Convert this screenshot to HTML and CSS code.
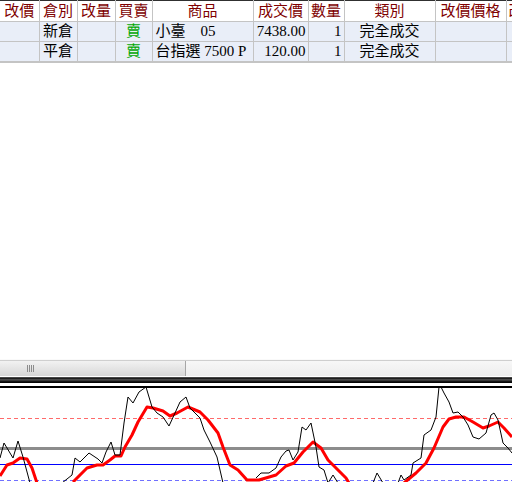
FILE: index.html
```html
<!DOCTYPE html>
<html>
<head>
<meta charset="utf-8">
<link rel="stylesheet" href="styles.css">
</head>
<body>
<div class="app">
  <div class="table-wrap">
    <table class="grid">
      <colgroup>
        <col style="width:39px"><col style="width:38px"><col style="width:38px"><col style="width:37px">
        <col style="width:101px"><col style="width:55px"><col style="width:36px"><col style="width:91px">
        <col style="width:71px"><col style="width:64px">
      </colgroup>
      <thead>
        <tr>
          <th>改價</th><th>倉別</th><th>改量</th><th>買賣</th><th>商品</th><th>成交價</th><th>數量</th><th>類別</th><th>改價價格</th><th class="left">改價數量</th>
        </tr>
      </thead>
      <tbody>
        <tr>
          <td></td><td class="c">新倉</td><td></td><td class="c sell">賣</td><td class="l">小臺    05</td><td class="r">7438.00</td><td class="r">1</td><td class="c">完全成交</td><td></td><td></td>
        </tr>
        <tr>
          <td></td><td class="c">平倉</td><td></td><td class="c sell">賣</td><td class="l">台指選 7500 P</td><td class="r">120.00</td><td class="r">1</td><td class="c">完全成交</td><td></td><td></td>
        </tr>
      </tbody>
    </table>
  </div>
  <div class="blank"></div>
  <div class="hscroll">
    <div class="thumb"><span class="grip"></span></div>
    <div class="track"></div>
  </div>
  <div class="gap1"></div>
  <div class="splitter"></div>
  <div class="gap2"></div>
  <div class="chart-frame">
    <svg class="chart" viewBox="0 388 512 94" preserveAspectRatio="none">
      <line x1="0" y1="418.5" x2="512" y2="418.5" stroke="#ff6a6a" stroke-width="1" stroke-dasharray="4 3"/>
      <line x1="0" y1="448.5" x2="512" y2="448.5" stroke="#8c8c8c" stroke-width="3"/>
      <line x1="0" y1="464.5" x2="512" y2="464.5" stroke="#0000ff" stroke-width="1"/>
      <line x1="0" y1="480.5" x2="512" y2="480.5" stroke="#7070ff" stroke-width="1" stroke-dasharray="4 3"/>
      <polyline fill="none" stroke="#ff0000" stroke-width="3" stroke-linejoin="round"
        points="0,476 7,465 13,463 20,458 27,459 32,468 37,483"/>
      <polyline fill="none" stroke="#ff0000" stroke-width="3" stroke-linejoin="round"
        points="73,482 87,468 97,465 103,465 110,460 115,456 121,456 125,447 132,435 138,422 147,407 153,408 163,411 170,416 177,413 188,407 200,412 208,420 218,433 223,447 230,465 238,470 247,480 259,480 276,475 286,466 294,463 303,452 313,442 321,448 328,460 336,468 346,478 349,483"/>
      <polyline fill="none" stroke="#ff0000" stroke-width="3" stroke-linejoin="round"
        points="404,483 416,473 426,463 434,448 443,427 449,419 456,417 464,417 473,422 483,428 489,426 498,422 504,428 512,437"/>
      <polyline fill="none" stroke="#000" stroke-width="1"
        points="0,458 4,443 13,458 18,441 23,457 30,483"/>
      <polyline fill="none" stroke="#000" stroke-width="1"
        points="62,483 72,475 75,458 80,462 89,453 98,459 102,463 106,452 111,442 115,455 120,455 124,423 128,397 133,403 139,392 146,387 152,407 157,413 163,417 169,426 175,413 180,402 186,397 190,408 200,418 204,430 210,442 217,457 223,483"/>
      <polyline fill="none" stroke="#000" stroke-width="1"
        points="256,478 261,473 269,473 276,468 281,457 286,451 289,450 293,460 298,452 302,427 306,430 311,423 316,447 319,467 324,470 328,483 333,475 338,483"/>
      <polyline fill="none" stroke="#000" stroke-width="1"
        points="373,483 377,473 383,483"/>
      <polyline fill="none" stroke="#000" stroke-width="1"
        points="398,483 401,475 404,480 411,475 413,463 421,458 424,435 431,430 436,417 439,387 440,385 444,393 449,402 453,413 458,412 463,417 468,425 473,437 479,439 486,433 491,415 494,413 498,420 503,443 508,448 512,453"/>
    </svg>
  </div>
</div>
</body>
</html>
```

FILE: styles.css
```css
html, body {
  margin: 0;
  padding: 0;
  background: #ffffff;
}
.app {
  width: 512px;
  height: 482px;
  overflow: hidden;
  display: flex;
  flex-direction: column;
}
.table-wrap {
  width: 512px;
  overflow: hidden;
  flex: none;
}
.grid {
  table-layout: fixed;
  width: 570px;
  border-collapse: collapse;
  font-family: "Liberation Serif", "Noto Sans CJK TC", serif;
  font-size: 15px;
  border-top: 1px solid #303030;
  border-bottom: 2px solid #c4c4c4;
}
.grid th {
  height: 20px;
  padding: 0;
  font-weight: normal;
  color: #800000;
  text-align: center;
  white-space: nowrap;
  overflow: hidden;
  background: #ffffff;
  border-left: 1px solid #c4c4c4;
  border-right: 1px solid #c4c4c4;
  border-bottom: 1px solid #c4c4c4;
  line-height: 19px;
}
.grid th.left {
  text-align: left;
  padding-left: 2px;
}
.grid td {
  height: 19px;
  padding: 0 3px;
  background: #e9eef8;
  color: #000;
  white-space: pre;
  overflow: hidden;
  border: 1px solid #c4c4c4;
  line-height: 19px;
}
.grid th:first-child, .grid td:first-child {
  border-left: none;
}
.grid .c { text-align: center; }
.grid .r { text-align: right; padding-right: 2px; }
.grid .l { text-align: left; padding-left: 3px; }
.grid .sell { color: #00a800; }
.blank {
  flex: 1;
}
.hscroll {
  flex: none;
  height: 16px;
  display: flex;
  border-top: 1px solid #fafafa;
  box-shadow: inset 0 1px 0 #cfcfcf;
  background: linear-gradient(#f8f8f8, #ededed);
}
.thumb {
  width: 185px;
  height: 15px;
  margin-top: 1px;
  border-right: 1px solid #a6a6a6;
  border-bottom: 1px solid #b4b4b4;
  background: linear-gradient(#f2f2f2, #e2e2e2 60%, #d6d6d6);
  display: flex;
  align-items: center;
}
.grip {
  margin-left: 27px;
  width: 7px;
  height: 7px;
  background: repeating-linear-gradient(90deg, #8c8c8c 0 1px, transparent 1px 2px);
}
.track {
  flex: 1;
}
.gap1 {
  height: 1px;
  flex: none;
  background: #ffffff;
}
.splitter {
  height: 6px;
  flex: none;
  background: linear-gradient(#8a8a8a 0, #000 17%, #3a3a3a 33%, #555 50%, #1a1a1a 67%, #000 100%);
}
.gap2 {
  height: 3px;
  flex: none;
  background: #ffffff;
}
.chart-frame {
  flex: none;
  height: 94px;
  border-top: 2px solid #000;
  display: flex;
}
.chart {
  width: 512px;
  height: 94px;
  display: block;
}
```
